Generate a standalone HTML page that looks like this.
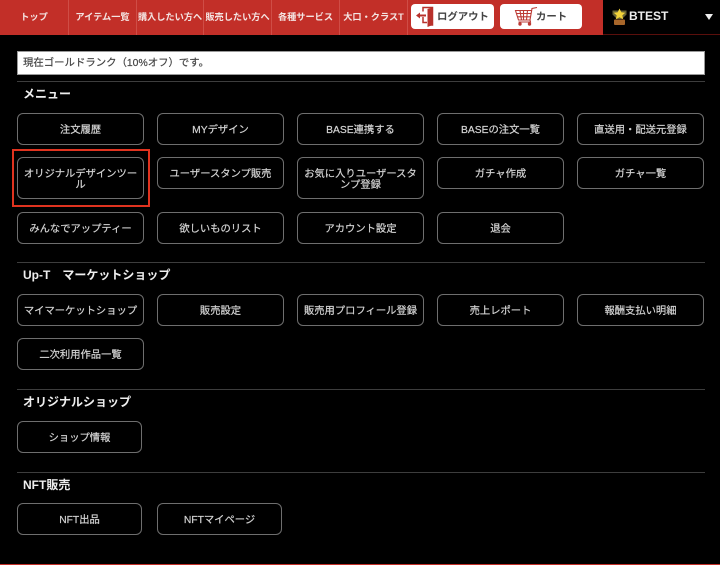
<!DOCTYPE html>
<html lang="ja">
<head>
<meta charset="utf-8">
<style>
html,body{margin:0;padding:0;background:#000;}
body{width:720px;height:565px;overflow:hidden;font-family:"Liberation Sans","Noto Sans CJK JP",sans-serif;}
#p{position:relative;width:720px;height:565px;overflow:hidden;background:#000;filter:blur(.35px);}
.a{position:absolute;}
.nav{position:absolute;top:0;height:35px;line-height:33px;padding-top:1px;box-sizing:border-box;text-align:center;color:#f4e4e2;font-size:9.2px;font-weight:bold;white-space:nowrap;}
.dv{position:absolute;top:0;width:1px;height:35px;background:#cf4d46;}
.b{position:absolute;box-sizing:border-box;width:127px;height:32px;border:1px solid #6e6e6e;border-radius:6px;color:#d4d4d4;font-size:10.3px;line-height:11px;text-align:center;display:flex;align-items:center;justify-content:center;padding:3px 4px 0;-webkit-text-stroke:.2px #d4d4d4;}
.t{position:absolute;left:23px;color:#eee;font-size:12px;font-weight:bold;line-height:16px;white-space:pre;}
.l{position:absolute;left:17px;width:688px;height:1px;background:#3d3d3d;}
.w{position:absolute;top:4px;height:25px;background:#fff;border-radius:4px;box-sizing:border-box;color:#444;font-size:10.4px;font-weight:bold;line-height:25px;padding-top:1px;}
</style>
</head>
<body>
<div id="p">
<div class="a" style="left:0;top:0;width:603px;height:35px;background:#c22f28;"></div>
<div class="a" style="left:603px;top:34px;width:117px;height:1px;background:#5a0f0c;"></div>

<div class="nav" style="left:0;width:68px;">トップ</div>
<div class="dv" style="left:68px;"></div>
<div class="nav" style="left:69px;width:67px;">アイテム一覧</div>
<div class="dv" style="left:136px;"></div>
<div class="nav" style="left:137px;width:66px;">購入したい方へ</div>
<div class="dv" style="left:203px;"></div>
<div class="nav" style="left:204px;width:67px;">販売したい方へ</div>
<div class="dv" style="left:271px;"></div>
<div class="nav" style="left:272px;width:67px;">各種サービス</div>
<div class="dv" style="left:339px;"></div>
<div class="nav" style="left:340px;width:67px;">大口・クラスT</div>
<div class="dv" style="left:407px;"></div>

<div class="w" style="left:411px;width:83px;padding-left:26px;">ログアウト</div>
<svg class="a" style="left:416px;top:6px;" width="18" height="22" viewBox="0 0 18 22">
<path d="M7 5.500V1.500H16.500V19H12" fill="none" stroke="#b8312b" stroke-width="1.500"/>
<path d="M7 11V16.500H11" fill="none" stroke="#b8312b" stroke-width="1.500"/>
<path d="M11.500 3L16.500 1.500V19L11.500 21Z" fill="#b8312b"/>
<path d="M0 9.500L4 6.500V8.500H10V10.500H4V12.500Z" fill="#b8312b"/>
</svg>

<div class="w" style="left:500px;width:82px;padding-left:36px;">カート</div>
<svg class="a" style="left:514px;top:6px;" width="24" height="20" viewBox="0 0 24 20" fill="none" stroke="#bb3a34" stroke-width="1.100">
<path d="M23 1.500L18 2.500L16 14H4.500L1.500 4.500H17.600"/>
<path d="M2.500 7.500H17M3.500 10.800H16.500M6 4.500L7.500 14M9.500 4.500V14M13.500 4.500L12.500 14"/>
<path d="M16 14L16.500 16H4.500" />
<circle cx="6" cy="18" r="1.700" fill="#bb3a34" stroke="none"/>
<circle cx="15.500" cy="18" r="1.700" fill="#bb3a34" stroke="none"/>
</svg>

<svg class="a" style="left:612px;top:8px;" width="15" height="17" viewBox="0 0 15 17">
<rect x="2" y="11.500" width="11" height="5.500" rx="1" fill="#a8662a"/>
<path d="M0.500 2.500H14.500V6.500L10 11H5L0.500 6.500Z" fill="#6a6536"/>
<path d="M7.500 0.500L9.300 4.300L13.300 4.700L10.300 7.400L11.200 11.200L7.500 9.200L3.800 11.200L4.700 7.400L1.700 4.700L5.700 4.300Z" fill="#f2d33a"/>
</svg>
<div class="a" style="left:629px;top:9px;color:#eee;font-size:12px;font-weight:bold;line-height:15px;">BTEST</div>
<div class="a" style="left:705px;top:14px;width:0;height:0;border-left:4px solid transparent;border-right:4px solid transparent;border-top:6px solid #eee;"></div>

<div class="a" style="left:17px;top:51px;width:688px;height:24px;box-sizing:border-box;background:#fff;border:1px solid #999;color:#444;font-size:10.4px;line-height:24px;padding-left:5px;-webkit-text-stroke:.2px #444;">現在ゴールドランク（10%オフ）です。</div>
<div class="l" style="top:81px;"></div>
<div class="t" style="top:86px;">メニュー</div>

<div class="b" style="left:17px;top:113px;">注文履歴</div>
<div class="b" style="left:157px;top:113px;">MYデザイン</div>
<div class="b" style="left:297px;top:113px;">BASE連携する</div>
<div class="b" style="left:437px;top:113px;">BASEの注文一覧</div>
<div class="b" style="left:577px;top:113px;">直送用・配送元登録</div>

<div class="a" style="left:12px;top:149px;width:138px;height:58px;box-sizing:border-box;border:2px solid #e0331f;"></div>
<div class="b" style="left:17px;top:157px;height:42px;">オリジナルデザインツール</div>
<div class="b" style="left:157px;top:157px;">ユーザースタンプ販売</div>
<div class="b" style="left:297px;top:157px;height:42px;">お気に入りユーザースタンプ登録</div>
<div class="b" style="left:437px;top:157px;">ガチャ作成</div>
<div class="b" style="left:577px;top:157px;">ガチャ一覧</div>

<div class="b" style="left:17px;top:212px;">みんなでアップティー</div>
<div class="b" style="left:157px;top:212px;">欲しいものリスト</div>
<div class="b" style="left:297px;top:212px;">アカウント設定</div>
<div class="b" style="left:437px;top:212px;">退会</div>

<div class="l" style="top:262px;"></div>
<div class="t" style="top:267px;">Up-T　マーケットショップ</div>

<div class="b" style="left:17px;top:294px;">マイマーケットショップ</div>
<div class="b" style="left:157px;top:294px;">販売設定</div>
<div class="b" style="left:297px;top:294px;">販売用プロフィール登録</div>
<div class="b" style="left:437px;top:294px;">売上レポート</div>
<div class="b" style="left:577px;top:294px;">報酬支払い明細</div>
<div class="b" style="left:17px;top:338px;">二次利用作品一覧</div>

<div class="l" style="top:389px;"></div>
<div class="t" style="top:394px;">オリジナルショップ</div>
<div class="b" style="left:17px;top:421px;width:125px;">ショップ情報</div>

<div class="l" style="top:472px;"></div>
<div class="t" style="top:477px;">NFT販売</div>
<div class="b" style="left:17px;top:503px;width:125px;">NFT出品</div>
<div class="b" style="left:157px;top:503px;width:125px;">NFTマイページ</div>

<div class="a" style="left:0;top:564px;width:720px;height:1px;background:#c22f28;"></div>
</div>
</body>
</html>
